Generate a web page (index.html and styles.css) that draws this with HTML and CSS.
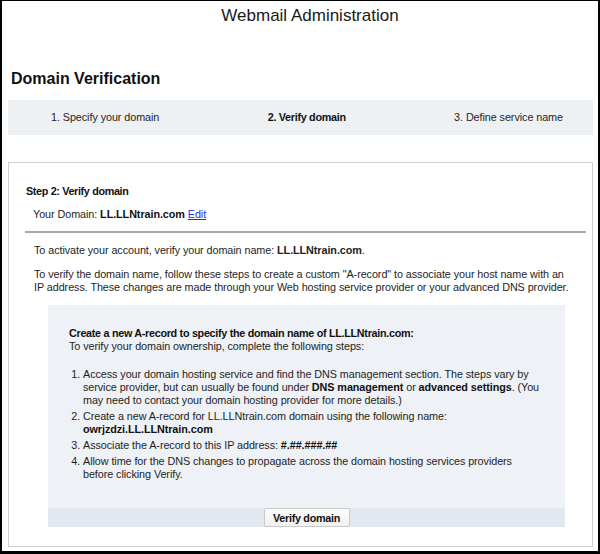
FILE: index.html
```html
<!DOCTYPE html>
<html lang="en">
<head>
<meta charset="utf-8">
<title>Webmail Administration</title>
<link rel="stylesheet" href="styles.css">
</head>
<body>
<div class="frame">
  <h1 class="app-title">Webmail Administration</h1>
  <h2 class="page-title">Domain Verification</h2>
  <div class="steps">
    <span class="step">1. Specify your domain</span>
    <span class="step step-current">2. Verify domain</span>
    <span class="step">3. Define service name</span>
  </div>
  <div class="panel">
    <div class="panel-title">Step 2: Verify domain</div>
    <div class="your-domain">Your Domain: <b>LL.LLNtrain.com</b> <a href="#" class="edit">Edit</a></div>
    <hr class="sep">
    <div class="panel-body">
      <p class="activate">To activate your account, verify your domain name: <b>LL.LLNtrain.com</b>.</p>
      <p class="explain">To verify the domain name, follow these steps to create a custom "A-record" to associate your host name with an IP address. These changes are made through your Web hosting service provider or your advanced DNS provider.</p>
      <div class="record-box">
        <div class="record-content">
          <div class="record-title">Create a new A-record to specify the domain name of LL.LLNtrain.com:</div>
          <div class="record-intro">To verify your domain ownership, complete the following steps:</div>
          <ol class="record-steps">
            <li>Access your domain hosting service and find the DNS management section. The steps vary by service provider, but can usually be found under <b>DNS management</b> or <b>advanced settings</b>. (You may need to contact your domain hosting provider for more details.)</li>
            <li>Create a new A-record for LL.LLNtrain.com domain using the following name:<br><b>owrjzdzi.LL.LLNtrain.com</b></li>
            <li>Associate the A-record to this IP address: <b>#.##.###.##</b></li>
            <li>Allow time for the DNS changes to propagate across the domain hosting services providers before clicking Verify.</li>
          </ol>
        </div>
        <div class="record-footer">
          <button class="verify-btn" type="button">Verify domain</button>
        </div>
      </div>
    </div>
  </div>
</div>
</body>
</html>
```
FILE: styles.css
```css
html, body {
  margin: 0;
  padding: 0;
  background: #ffffff;
}
body {
  font-family: "Liberation Sans", Arial, sans-serif;
  font-size: 10.8px;
  letter-spacing: -0.07px;
  color: #1e1e1e;
}
.frame {
  box-sizing: border-box;
  width: 600px;
  height: 554px;
  border-style: solid;
  border-color: #000;
  border-width: 1px 2px 3px 2px;
  padding: 0 5px 0 6px;
  overflow: hidden;
}
.app-title {
  margin: 5px 0 0 0;
  padding-left: 19px;
  font-size: 17px;
  line-height: 20px;
  letter-spacing: 0;
  font-weight: normal;
  text-align: center;
  color: #1a1a1a;
}
.page-title {
  margin: 43px 0 0 3px;
  font-size: 16px;
  line-height: 20px;
  letter-spacing: 0;
  font-weight: bold;
  color: #111;
}
.steps {
  margin-top: 11px;
  height: 35px;
  background: #eef1f4;
  display: flex;
  justify-content: space-between;
  align-items: center;
  padding: 0 30px 0 43px;
  line-height: 13px;
}
.step-current {
  font-weight: bold;
  letter-spacing: -0.3px;
  color: #111;
}
.panel {
  margin-top: 27px;
  height: 385px;
  box-sizing: border-box;
  border: 1px solid #d0d0d0;
  padding: 22px 6px 0 17px;
}
.panel-title {
  font-weight: bold;
  letter-spacing: -0.35px;
  line-height: 13px;
  color: #111;
}
.your-domain {
  margin-top: 10px;
  padding-left: 7px;
  line-height: 13px;
}
.your-domain b {
  color: #111;
}
.edit {
  color: #2a2ae6;
  text-decoration: underline;
}
.sep {
  margin: 10px 0 0 -1px;
  border: 0;
  height: 2px;
  background: #a8a8a8;
}
.panel-body {
  padding-left: 8px;
}
.activate {
  margin: 11px 0 0 0;
  line-height: 13px;
}
.explain {
  margin: 11px 14px 0 0;
  line-height: 12.5px;
}
.record-box {
  margin: 12px 21px 0 14px;
  background: #eef1f5;
}
.record-content {
  padding: 22px 22px 27px 21px;
}
.record-title {
  font-weight: bold;
  letter-spacing: -0.3px;
  line-height: 13px;
  color: #111;
}
.record-intro {
  line-height: 13px;
}
.record-steps {
  margin: 15px 0 0 0;
  padding-left: 14px;
  line-height: 13px;
}
.record-steps li + li {
  margin-top: 3px;
}
.record-steps b {
  color: #111;
}
.record-footer {
  background: #e2e8ef;
  height: 19px;
  display: flex;
  justify-content: center;
  align-items: flex-start;
}
.verify-btn {
  box-sizing: border-box;
  height: 19px;
  width: 86px;
  margin: 0;
  padding: 0;
  border: 1px solid #c9c9c9;
  border-radius: 2px;
  background: linear-gradient(#fdfdfd, #f0f0f0);
  font-family: "Liberation Sans", Arial, sans-serif;
  font-size: 10.8px;
  letter-spacing: -0.3px;
  font-weight: bold;
  color: #111;
}
```
